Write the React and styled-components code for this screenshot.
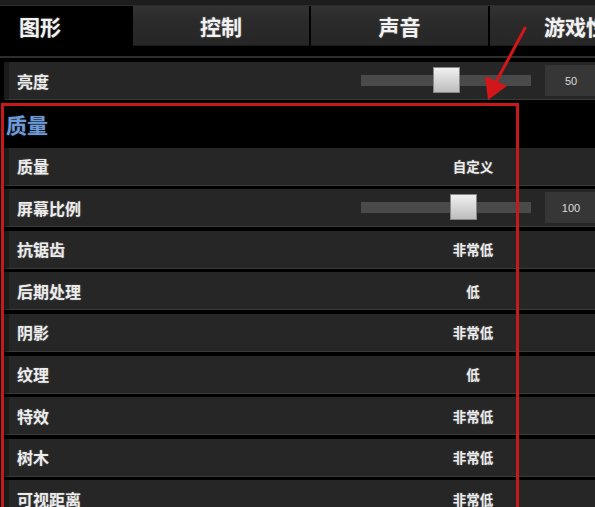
import React from 'react';
import styled, { createGlobalStyle } from 'styled-components';

const GlobalStyle = createGlobalStyle`
  html, body {
    margin: 0;
    padding: 0;
    background: #000;
    overflow: hidden;
  }
  body {
    font-family: "Noto Sans CJK SC", "Noto Sans", sans-serif;
  }
`;

const tabs = [
  { name: '图形', width: 131, active: true },
  { name: '控制', width: 176 },
  { name: '声音', width: 177 },
  { name: '游戏性', width: 120 },
];

const quality = [
  { label: '质量', value: '自定义' },
  { label: '屏幕比例', slider: 62, value: '100' },
  { label: '抗锯齿', value: '非常低' },
  { label: '后期处理', value: '低' },
  { label: '阴影', value: '非常低' },
  { label: '纹理', value: '低' },
  { label: '特效', value: '非常低' },
  { label: '树木', value: '非常低' },
  { label: '可视距离', value: '非常低' },
];

const Settings = () => {
  return (
    <Page>
      <GlobalStyle />
      <TopStrip />
      <TabBar>
        {tabs.map((t) => (
          <Tab key={t.name} $w={t.width} $active={t.active}>{t.name}</Tab>
        ))}
      </TabBar>
      <Divider />
      <Row>
        <Label>亮度</Label>
        <Slider pct={50} value="50" />
      </Row>
      <SectionHeader>质量</SectionHeader>
      {quality.map((q) => (
        <Row key={q.label}>
          <Label>{q.label}</Label>
          {q.slider ? <Slider pct={q.slider} value={q.value} /> : <Value>{q.value}</Value>}
        </Row>
      ))}

      {/* red annotation */}
      <RedBox />
      <Arrow width="60" height="110" viewBox="0 0 60 110">
        <line x1="50" y1="28" x2="20" y2="84" stroke="#d3161a" strokeWidth="3" strokeLinecap="round" />
        <polygon points="13,100 10,76 32,86" fill="#d3161a" />
      </Arrow>
    </Page>
  );
};

const Slider = ({ pct, value }) => (
  <>
    <Track>
      <Thumb style={{ left: `${(pct / 100) * 143}px` }} />
    </Track>
    <ValueBox>{value}</ValueBox>
  </>
);

const Page = styled.div`
  position: relative;
  width: 595px;
  height: 507px;
  overflow: hidden;
  background: #000;
`;

const TopStrip = styled.div`
  height: 5px;
  background: #1d1d1d;
  border-bottom: 1px solid #2c2c2c;
`;

const TabBar = styled.div`
  display: flex;
  gap: 2px;
  height: 40px;
  background: #000;
`;

const Tab = styled.div`
  flex: 0 0 ${(p) => p.$w}px;
  display: flex;
  align-items: center;
  justify-content: ${(p) => (p.$active ? 'flex-start' : 'center')};
  padding-left: ${(p) => (p.$active ? '19px' : '0')};
  box-sizing: border-box;
  background: ${(p) => (p.$active ? '#000' : 'linear-gradient(#333 0%, #2a2a2a 40%, #262626 100%)')};
  border-bottom: ${(p) => (p.$active ? 'none' : '1px solid #1a1a1a')};
  color: #f2f2f2;
  font-size: 21px;
  font-weight: 700;
  white-space: nowrap;
  overflow: hidden;
  text-shadow: 0 0 2px rgba(255, 255, 255, 0.35);
  &:last-child {
    justify-content: flex-start;
    padding-left: 54px;
  }
`;

const Divider = styled.div`
  height: 2px;
  margin: 10px 0 4px;
  background: #2e2e2e;
`;

const Row = styled.div`
  display: flex;
  align-items: center;
  height: 37px;
  margin-left: 4px;
  margin-bottom: 3.6px;
  background: #262626;
  border-left: 5px solid #1b1b1b;
  border-bottom: 1px solid #3a3a3a;
`;

const Label = styled.div`
  flex: 1;
  padding-left: 8px;
  color: #ececec;
  font-size: 16px;
  font-weight: 700;
  text-shadow: 0 0 2px rgba(255, 255, 255, 0.3);
`;

const Value = styled.div`
  width: 80px;
  margin-right: 82px;
  text-align: center;
  color: #ececec;
  font-size: 13.5px;
  font-weight: 700;
  text-shadow: 0 0 2px rgba(255, 255, 255, 0.3);
`;

const Track = styled.div`
  position: relative;
  width: 170px;
  height: 11px;
  margin-right: 14px;
  background: #4a4a4a;
`;

const Thumb = styled.div`
  position: absolute;
  top: -8px;
  width: 27px;
  height: 26px;
  background: linear-gradient(#f0f0f0, #bdbdbd);
  border: 1px solid #888;
  box-sizing: border-box;
`;

const ValueBox = styled.div`
  width: 52px;
  height: 31px;
  margin-right: -2px;
  display: flex;
  align-items: center;
  justify-content: center;
  background: #363636;
  color: #dcdcdc;
  font-family: "Liberation Sans", sans-serif;
  font-size: 11px;
`;

const SectionHeader = styled.div`
  height: 44px;
  margin-top: 3px;
  padding: 0 0 4px 6px;
  box-sizing: border-box;
  display: flex;
  align-items: center;
  background: #000;
  font-size: 21px;
  font-weight: 700;
  color: #6f9bd6;
  text-shadow: 0 0 2px rgba(120, 160, 230, 0.4);
`;

const RedBox = styled.div`
  position: absolute;
  left: 1px;
  top: 103px;
  width: 518px;
  height: 420px;
  box-sizing: border-box;
  border: 3px solid #c8181a;
  pointer-events: none;
`;

const Arrow = styled.svg`
  position: absolute;
  left: 475px;
  top: 0;
  pointer-events: none;
`;

export default Settings;
